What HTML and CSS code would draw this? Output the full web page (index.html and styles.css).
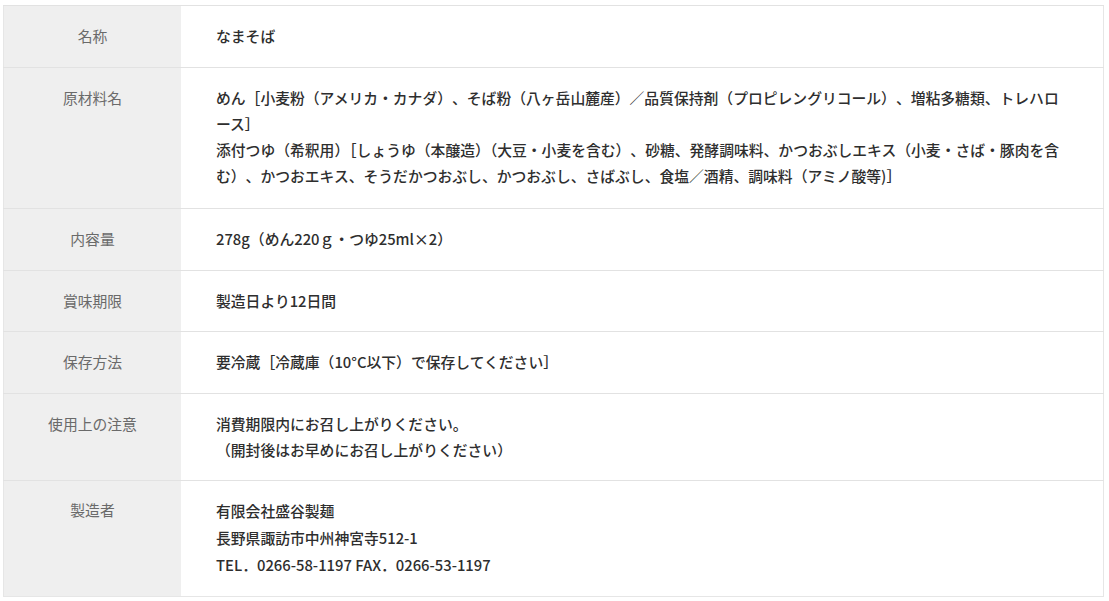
FILE: index.html
```html
<!DOCTYPE html>
<html lang="ja">
<head>
<meta charset="utf-8">
<link rel="stylesheet" href="styles.css">
</head>
<body>
<div class="wrap">
<table class="spec">
<tbody>
<tr class="r1"><th>名称</th><td>なまそば</td></tr>
<tr class="r2"><th>原材料名</th><td>めん［小麦粉（アメリカ・カナダ）、そば粉（八ヶ岳山麓産）／品質保持剤（プロピレングリコール）、増粘多糖類、トレハロース］<br>添付つゆ（希釈用<span class="trim">）［</span>しょうゆ（本醸造<span class="trim">）（</span>大豆・小麦を含む）、砂糖、発酵調味料、かつおぶしエキス（小麦・さば・豚肉を含む）、かつおエキス、そうだかつおぶし、かつおぶし、さばぶし、食塩／酒精、調味料（アミノ酸等)］</td></tr>
<tr class="r3"><th>内容量</th><td>278g（めん220ｇ・つゆ25ml×2）</td></tr>
<tr class="r4"><th>賞味期限</th><td>製造日より12日間</td></tr>
<tr class="r5"><th>保存方法</th><td>要冷蔵［冷蔵庫（10°C以下）で保存してください］</td></tr>
<tr class="r6"><th>使用上の注意</th><td>消費期限内にお召し上がりください。<br>（開封後はお早めにお召し上がりください）</td></tr>
<tr class="r7"><th>製造者</th><td>有限会社盛谷製麺<br>長野県諏訪市中州神宮寺512-1<br>TEL．0266-58-1197 FAX．0266-53-1197</td></tr>
</tbody>
</table>
</div>
</body>
</html>
```
FILE: styles.css
```css
html, body {
  margin: 0;
  padding: 0;
  background: #ffffff;
}
body {
  font-family: "Noto Sans CJK JP", "Noto Sans", sans-serif;
}
.wrap {
  padding: 5px 5px 0 3px;
}
.spec {
  width: 1101px;
  border-collapse: collapse;
  border: 1px solid #e6e6e6;
  font-size: 14.8px;
  line-height: 26px;
  text-spacing-trim: space-all;
}
.spec th,
.spec td {
  border-top: 1px solid #e2e2e2;
  vertical-align: top;
}
.spec th {
  width: 177px;
  background: #efefef;
  color: #6a6a6a;
  font-weight: 400;
  text-align: center;
  padding: 17px 0 18px;
}
.spec td {
  color: #2e2e2e;
  font-weight: 500;
  text-align: left;
  padding: 17px 36px 18px 35px;
}
.spec .trim {
  text-spacing-trim: normal;
}
.spec .r2 td { padding-bottom: 19px; }
.spec .r4 td, .spec .r4 th { padding-bottom: 17px; }
.spec .r6 td, .spec .r6 th { padding-bottom: 17px; }
.spec .r7 td { line-height: 27px; padding-top: 16px; padding-bottom: 18px; }
.spec .r7 th { padding-top: 16px; }
```
